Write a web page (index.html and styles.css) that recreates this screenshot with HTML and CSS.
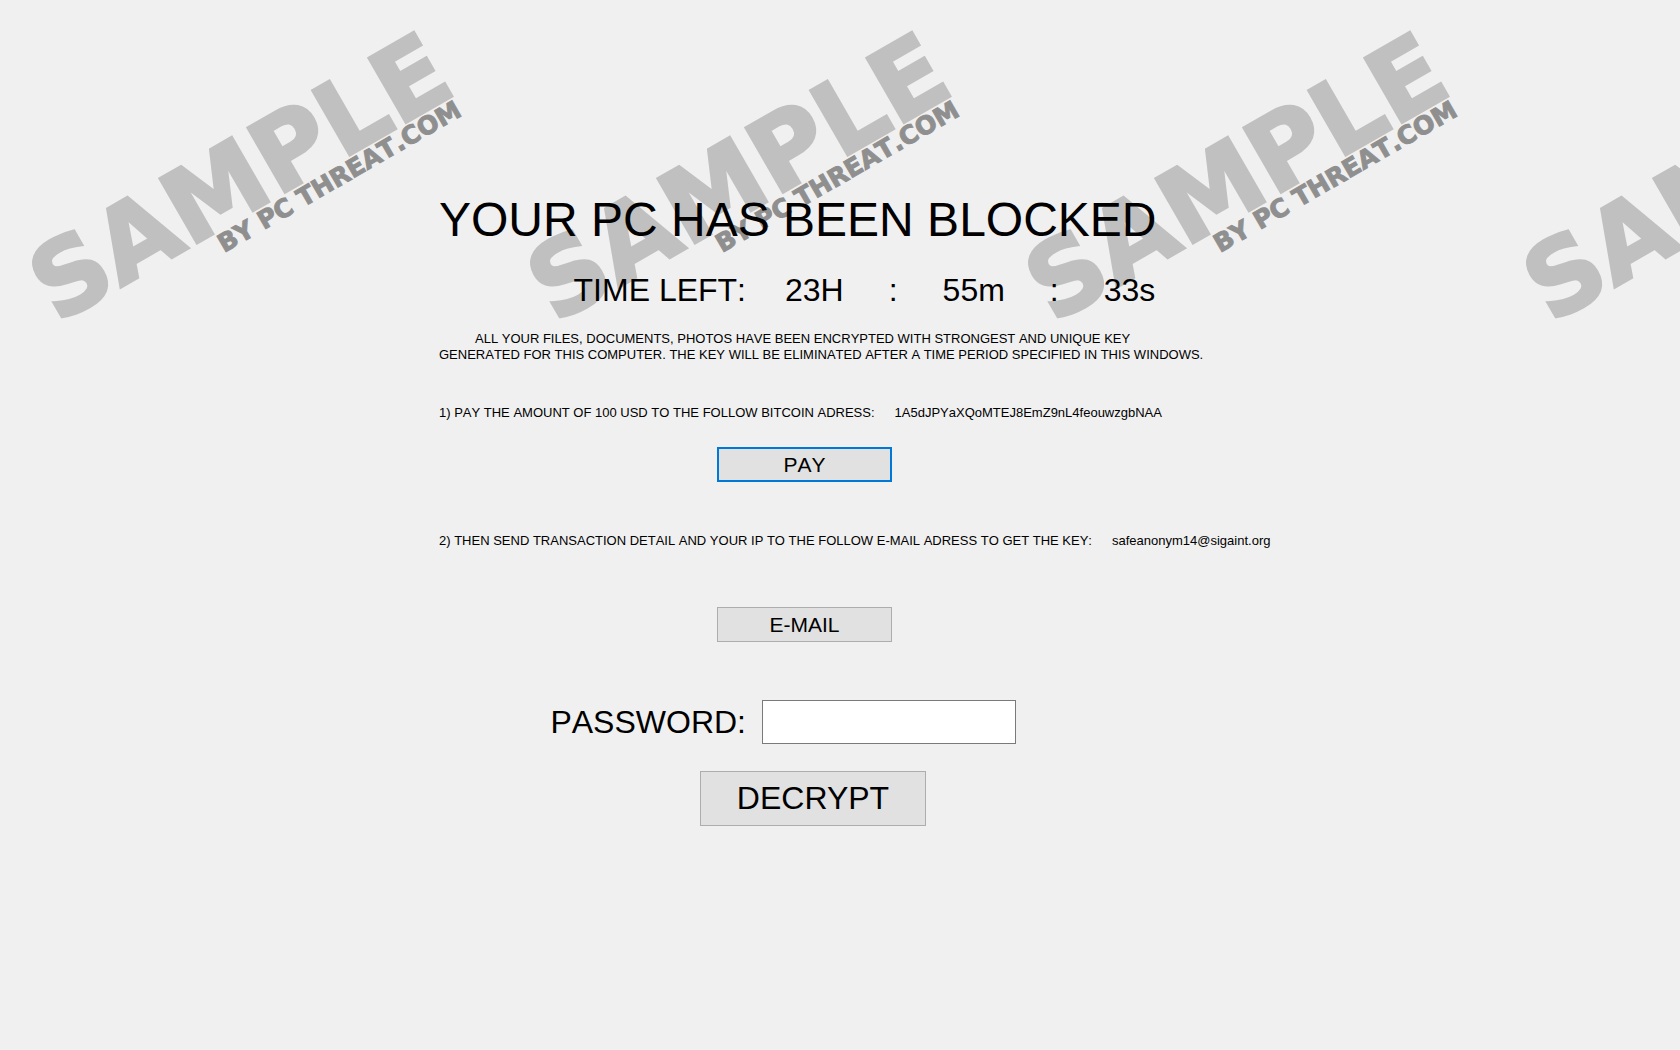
FILE: index.html
```
<!DOCTYPE html>
<html lang="en">
    <head>
        <meta charset="utf-8">
        <title>Sample</title>
        <link rel="stylesheet" href="styles.css">
    </head>
    <body>
        <div class="watermarks" aria-hidden="true">
            <svg class="watermark" viewBox="0 0 498 340">
                <text class="mark-big" transform="translate(57 324) rotate(-30)">SAMPLE</text>
                <text class="mark-small" transform="translate(224 253) rotate(-30)">BY PC THREAT.COM</text>
            </svg>
            <svg class="watermark" viewBox="0 0 498 340">
                <text class="mark-big" transform="translate(57 324) rotate(-30)">SAMPLE</text>
                <text class="mark-small" transform="translate(224 253) rotate(-30)">BY PC THREAT.COM</text>
            </svg>
            <svg class="watermark" viewBox="0 0 498 340">
                <text class="mark-big" transform="translate(57 324) rotate(-30)">SAMPLE</text>
                <text class="mark-small" transform="translate(224 253) rotate(-30)">BY PC THREAT.COM</text>
            </svg>
            <svg class="watermark" viewBox="0 0 498 340">
                <text class="mark-big" transform="translate(57 324) rotate(-30)">SAMPLE</text>
            </svg>
        </div>
        <main class="content">
            <h1>YOUR PC HAS BEEN BLOCKED</h1>
            <div class="row timer">
                <span class="label">TIME LEFT:</span>
                <div class="counter">
                    <span>23H</span>
                    <span>:</span>
                    <span>55m</span>
                    <span>:</span>
                    <span>33s</span>
                </div>
            </div>
            <p class="notice">ALL YOUR FILES, DOCUMENTS, PHOTOS HAVE BEEN ENCRYPTED WITH STRONGEST AND UNIQUE KEY<br>GENERATED FOR THIS COMPUTER. THE KEY WILL BE ELIMINATED AFTER A TIME PERIOD SPECIFIED IN THIS WINDOWS.</p>
            <p class="step"><span>1) PAY THE AMOUNT OF 100 USD TO THE FOLLOW BITCOIN ADRESS:</span><span>1A5dJPYaXQoMTEJ8EmZ9nL4feouwzgbNAA</span></p>
            <button type="button" class="btn pay">PAY</button>
            <p class="step"><span>2) THEN SEND TRANSACTION DETAIL AND YOUR IP TO THE FOLLOW E-MAIL ADRESS TO GET THE KEY:</span><span>safeanonym14@sigaint.org</span></p>
            <button type="button" class="btn mail">E-MAIL</button>
            <div class="row password">
                <label class="label" for="password">PASSWORD:</label>
                <input type="password" id="password">
            </div>
            <button type="button" class="btn decrypt">DECRYPT</button>
        </main>
    </body>
</html>
```

FILE: styles.css
```
* {
    box-sizing: border-box;
}
body {
    margin: 0;
    min-height: 100vh;
    background-color: #f0f0f0;
    color: #000;
    font-family: "Liberation Sans", Arial, sans-serif;
    font-kerning: none;
}
.watermarks {
    position: absolute;
    top: 0;
    left: 0;
    width: 100%;
    display: flex;
    overflow: hidden;
    z-index: -1;
}
.watermark {
    flex: none;
    width: 498px;
    height: 340px;
    overflow: visible;
    font-family: "DejaVu Sans", sans-serif;
    font-weight: bold;
}
.mark-big {
    font-size: 102px;
    fill: #c0c0c0;
    stroke: #c0c0c0;
    stroke-width: 3px;
}
.mark-small {
    font-size: 25px;
    fill: #8f8f8f;
    stroke: #8f8f8f;
    stroke-width: 1px;
}
.content {
    width: 802px;
    margin: 0 auto;
    padding-top: 192px;
    white-space: nowrap;
}
h1 {
    margin: 0;
    font-size: 48px;
    line-height: 56px;
    font-weight: normal;
}
.row {
    display: flex;
    align-items: center;
    font-size: 32px;
    line-height: 36px;
}
.label {
    flex: none;
    width: 307px;
    text-align: right;
}
.timer {
    margin-top: 24px;
}
.counter {
    display: flex;
    gap: 45px;
    margin-left: 39px;
}
.notice {
    margin: 23px 0 42px;
    font-size: 13px;
    line-height: 16px;
    text-indent: 36px;
}
.step {
    display: flex;
    gap: 20px;
    margin: 0;
    font-size: 13px;
    line-height: 16px;
}
.btn {
    display: block;
    width: 175px;
    height: 35px;
    margin-left: 278px;
    padding: 0;
    border: 1px solid #adadad;
    background-color: #e1e1e1;
    color: #000;
    font-family: inherit;
    font-size: 21px;
    font-kerning: none;
}
.pay {
    margin-top: 26px;
    margin-bottom: 51px;
    border: 2px solid #0078d7;
}
.mail {
    margin-top: 58px;
    margin-bottom: 58px;
}
.password input {
    width: 254px;
    height: 44px;
    margin-left: 16px;
    padding: 0 6px;
    border: 1px solid #7a7a7a;
    background-color: #fff;
    font: inherit;
}
.decrypt {
    width: 226px;
    height: 55px;
    margin-top: 27px;
    margin-left: 261px;
    font-size: 32px;
    font-kerning: auto;
}
```
